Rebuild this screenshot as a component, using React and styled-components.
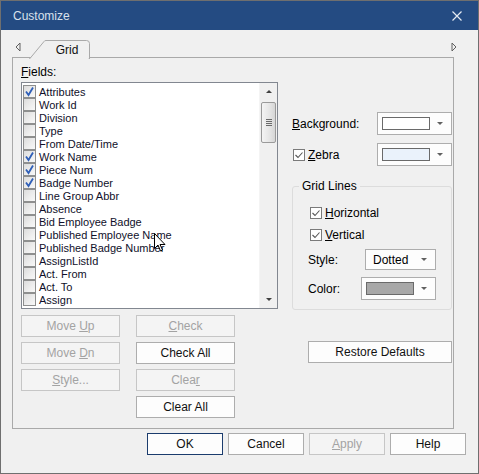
import React from "react";
import styled, { createGlobalStyle } from "styled-components";

const GlobalStyle = createGlobalStyle`
  html, body {
    margin: 0;
    padding: 0;
    background: #ffffff;
  }
  body {
    font-family: "Liberation Sans", Arial, sans-serif;
    font-size: 12px;
    color: #000;
  }
  u {
    text-decoration: underline;
    text-underline-offset: 1px;
  }
`;

const Window = styled.div`
  position: relative;
  width: 479px;
  height: 474px;
  box-sizing: border-box;
  border: 1px solid #6f6f6f;
  background: #f0f0f0;
  display: flex;
  flex-direction: column;
  overflow: hidden;
`;

const TitleBar = styled.div`
  height: 29px;
  background: #244b82;
  display: flex;
  align-items: center;
  justify-content: space-between;
  padding: 1px 16px 0 12px;
  box-sizing: border-box;
  color: #d9e1ec;
  font-size: 12px;
`;

const TabRow = styled.div`
  height: 27px;
  display: flex;
  align-items: flex-end;
  padding: 0 21px 0 14px;
  position: relative;
  z-index: 2;
`;

const ArrowBtn = styled.div`
  width: 14px;
  height: 27px;
  display: flex;
  align-items: flex-end;
  justify-content: ${(p) => (p.$right ? "flex-end" : "flex-start")};
  padding-bottom: 5px;
  box-sizing: border-box;
`;

const Tab = styled.div`
  position: relative;
  width: 61px;
  height: 18px;
  margin-bottom: -1px;
  display: flex;
  align-items: center;
  justify-content: center;
  padding: 1px 0 0 15px;
  box-sizing: border-box;
  font-size: 12px;
  color: #111;

  svg {
    position: absolute;
    left: 0;
    top: 0;
  }
  span {
    position: relative;
  }
`;

const Spacer = styled.div`
  flex: 1;
`;

const Panel = styled.div`
  margin-left: 11px;
  width: 442px;
  height: 372px;
  box-sizing: border-box;
  border: 1px solid #a9a9a9;
  display: grid;
  grid-template-columns: 257px 160px;
  column-gap: 14px;
  padding: 7px 0 0 8px;
  position: relative;
  z-index: 1;
`;

const Column = styled.div`
  display: flex;
  flex-direction: column;
`;

const FieldLabel = styled.div`
  height: 17px;
  line-height: 15px;
`;

const ListBox = styled.div`
  height: 227px;
  box-sizing: border-box;
  border: 1px solid #828790;
  background: #fff;
  display: flex;
`;

const Items = styled.div`
  flex: 1;
  padding: 2px 0 0 1px;
`;

const Item = styled.div`
  height: 13px;
  display: flex;
  align-items: center;
  gap: 3px;
  font-size: 11px;
  color: #10102a;
  white-space: nowrap;
`;

const ListCheck = styled.span`
  width: 13px;
  height: 13px;
  box-sizing: border-box;
  border: 1px solid #8e8f8f;
  background: linear-gradient(135deg, #dcdcdc 0%, #eeeeee 60%, #f8f8f8 100%);
  display: flex;
  align-items: center;
  justify-content: center;
`;

const ScrollBar = styled.div`
  width: 17px;
  background: #f0f0f0;
  border-left: 1px solid #f4f4f4;
  display: flex;
  flex-direction: column;
  align-items: center;
`;

const ScrollArrow = styled.div`
  height: 17px;
  width: 100%;
  display: flex;
  align-items: center;
  justify-content: center;
`;

const Tri = styled.span`
  width: 0;
  height: 0;
  border-left: 3px solid transparent;
  border-right: 3px solid transparent;
  ${(p) =>
    p.$up
      ? "border-bottom: 3px solid #404040;"
      : "border-top: 3px solid #404040;"}
`;

const Thumb = styled.div`
  width: 15px;
  height: 41px;
  margin-top: 2px;
  box-sizing: border-box;
  border: 1px solid #9a9a9a;
  border-radius: 2px;
  background: linear-gradient(90deg, #f4f4f4 0%, #e6e6e6 55%, #d6d6d6 100%);
  display: flex;
  flex-direction: column;
  align-items: center;
  justify-content: center;
  gap: 1px;

  i {
    display: block;
    width: 6px;
    height: 1px;
    background: #6a6a6a;
  }
`;

const ButtonGrid = styled.div`
  margin-top: 6px;
  display: grid;
  grid-template-columns: 99px 99px;
  column-gap: 16px;
  row-gap: 5px;
`;

const Button = styled.div`
  width: ${(p) => p.$w || 99}px;
  height: 22px;
  box-sizing: border-box;
  border: 1px solid
    ${(p) => (p.$default ? "#1b3c6d" : p.$disabled ? "#c6c6c6" : "#adadad")};
  background: ${(p) => (p.$disabled ? "#f4f4f4" : "#fdfdfd")};
  color: ${(p) => (p.$disabled ? "#a3a3a3" : "#111")};
  display: flex;
  align-items: center;
  justify-content: center;
  font-size: 12px;
  grid-column: ${(p) => p.$col || "auto"};
`;

const RightCol = styled.div`
  display: flex;
  flex-direction: column;
  padding-top: 47px;
`;

const Row = styled.div`
  height: 23px;
  display: flex;
  align-items: center;
  justify-content: space-between;
  margin-bottom: ${(p) => p.$mb || 0}px;
`;

const CheckLabel = styled.label`
  display: flex;
  align-items: center;
  gap: 3px;
  height: 16px;
  margin-left: ${(p) => p.$ml || 0}px;
  margin-top: ${(p) => p.$mt || 0}px;
`;

const FlatCheck = styled.span`
  width: 12px;
  height: 12px;
  box-sizing: border-box;
  border: 1px solid #7a7a7a;
  background: #fff;
  display: flex;
  align-items: center;
  justify-content: center;
`;

const Dropdown = styled.div`
  width: ${(p) => p.$w}px;
  height: ${(p) => p.$h}px;
  box-sizing: border-box;
  border: 1px solid #adadad;
  background: #fdfdfd;
  display: flex;
  align-items: center;
  padding: 0 8px 0 4px;
  gap: 6px;
`;

const Swatch = styled.span`
  width: ${(p) => p.$w}px;
  height: 13px;
  box-sizing: border-box;
  border: 1px solid #6a6a6a;
  background: ${(p) => p.$color};
`;

const DropText = styled.span`
  flex: 1;
  padding-left: 3px;
  font-size: 12px;
`;

const DropArrow = styled.span`
  margin-left: auto;
  width: 0;
  height: 0;
  border-left: 3px solid transparent;
  border-right: 3px solid transparent;
  border-top: 3px solid #606060;
`;

const GroupBox = styled.fieldset`
  margin: 13px 0 0;
  padding: 12px 15px 9px 15px;
  border: 1px solid #dcdcdc;
  border-radius: 3px;
  display: flex;
  flex-direction: column;

  legend {
    padding: 0 3px;
    margin-left: -9px;
    line-height: 14px;
  }
`;

const GroupRow = styled.div`
  display: flex;
  align-items: center;
  justify-content: space-between;
  height: ${(p) => p.$h}px;
  margin-top: ${(p) => p.$mt || 0}px;
`;

const RestoreRow = styled.div`
  display: flex;
  justify-content: flex-end;
  margin-top: 31px;
`;

const Footer = styled.div`
  display: flex;
  justify-content: flex-end;
  gap: 5px;
  padding: 4px 12px 0 0;
`;

const Cursor = styled.svg`
  position: absolute;
  left: 153px;
  top: 232px;
  z-index: 5;
`;

const fields = [
  ["Attributes", true],
  ["Work Id", false],
  ["Division", false],
  ["Type", false],
  ["From Date/Time", false],
  ["Work Name", true],
  ["Piece Num", true],
  ["Badge Number", true],
  ["Line Group Abbr", false],
  ["Absence", false],
  ["Bid Employee Badge", false],
  ["Published Employee Name", false],
  ["Published Badge Number", false],
  ["AssignListId", false],
  ["Act. From", false],
  ["Act. To", false],
  ["Assign", false],
];

const BlueTick = () => (
  <svg width="11" height="11" viewBox="0 0 11 11">
    <path d="M2 5.5 L4.5 9 L9 1.5" fill="none" stroke="#2f5fb8" strokeWidth="1.8" />
  </svg>
);

const GrayTick = () => (
  <svg width="10" height="10" viewBox="0 0 10 10">
    <path d="M1.5 5 L4 7.5 L8.5 2.5" fill="none" stroke="#555" strokeWidth="1.1" />
  </svg>
);

const App = () => {
  return (
    <>
      <GlobalStyle />
      <Window>
        <TitleBar>
          <span>Customize</span>
          <svg width="10" height="10" viewBox="0 0 10 10">
            <path d="M0.5 0.5 L9.5 9.5 M9.5 0.5 L0.5 9.5" stroke="#e6ebf2" strokeWidth="1.2" />
          </svg>
        </TitleBar>

        <TabRow>
          <ArrowBtn>
            <svg width="6" height="10" viewBox="0 0 6 10">
              <path d="M5 1 L1 5 L5 9 Z" fill="none" stroke="#606060" strokeWidth="1" />
            </svg>
          </ArrowBtn>
          <Tab>
            <svg width="61" height="19" viewBox="0 0 61 19">
              <path
                d="M0.5 19 L15 1.5 Q15.5 0.5 17 0.5 L57.5 0.5 Q60.5 0.5 60.5 3.5 L60.5 19 Z"
                fill="#f0f0f0"
                stroke="#a9a9a9"
                strokeWidth="1"
              />
              <rect x="1.5" y="18" width="58" height="1.5" fill="#f0f0f0" />
            </svg>
            <span>Grid</span>
          </Tab>
          <Spacer />
          <ArrowBtn $right>
            <svg width="6" height="10" viewBox="0 0 6 10">
              <path d="M1 1 L5 5 L1 9 Z" fill="none" stroke="#606060" strokeWidth="1" />
            </svg>
          </ArrowBtn>
        </TabRow>

        <Panel>
          <Column>
            <FieldLabel>
              <u>F</u>ields:
            </FieldLabel>
            <ListBox>
              <Items>
                {fields.map(([name, checked]) => (
                  <Item key={name}>
                    <ListCheck>{checked && <BlueTick />}</ListCheck>
                    {name}
                  </Item>
                ))}
              </Items>
              <ScrollBar>
                <ScrollArrow>
                  <Tri $up />
                </ScrollArrow>
                <Thumb>
                  <i />
                  <i />
                  <i />
                  <i />
                </Thumb>
                <Spacer />
                <ScrollArrow>
                  <Tri />
                </ScrollArrow>
              </ScrollBar>
            </ListBox>
            <ButtonGrid>
              <Button $disabled>
                Move&nbsp;<u>U</u>p
              </Button>
              <Button $disabled>
                <u>C</u>heck
              </Button>
              <Button $disabled>
                Move&nbsp;<u>D</u>n
              </Button>
              <Button>Check All</Button>
              <Button $disabled>
                <u>S</u>tyle...
              </Button>
              <Button $disabled>
                Clea<u>r</u>
              </Button>
              <Button $col="2">Clear All</Button>
            </ButtonGrid>
          </Column>

          <RightCol>
            <Row $mb={8}>
              <span>
                <u>B</u>ackground:
              </span>
              <Dropdown $w={75} $h={23}>
                <Swatch $w={48} $color="#ffffff" />
                <DropArrow />
              </Dropdown>
            </Row>
            <Row>
              <CheckLabel $ml={1}>
                <FlatCheck>
                  <GrayTick />
                </FlatCheck>
                <span>
                  <u>Z</u>ebra
                </span>
              </CheckLabel>
              <Dropdown $w={75} $h={23}>
                <Swatch $w={48} $color="#eaf2fb" />
                <DropArrow />
              </Dropdown>
            </Row>

            <GroupBox>
              <legend>Grid Lines</legend>
              <CheckLabel $ml={2}>
                <FlatCheck>
                  <GrayTick />
                </FlatCheck>
                <span>
                  <u>H</u>orizontal
                </span>
              </CheckLabel>
              <CheckLabel $ml={2} $mt={6}>
                <FlatCheck>
                  <GrayTick />
                </FlatCheck>
                <span>
                  <u>V</u>ertical
                </span>
              </CheckLabel>
              <GroupRow $h={21} $mt={6}>
                <span>Style:</span>
                <Dropdown $w={71} $h={21}>
                  <DropText>Dotted</DropText>
                  <DropArrow />
                </Dropdown>
              </GroupRow>
              <GroupRow $h={23} $mt={7}>
                <span>Color:</span>
                <Dropdown $w={75} $h={23}>
                  <Swatch $w={48} $color="#a8a8a8" />
                  <DropArrow />
                </Dropdown>
              </GroupRow>
            </GroupBox>

            <RestoreRow>
              <Button $w={144}>Restore Defaults</Button>
            </RestoreRow>
          </RightCol>
        </Panel>

        <Footer>
          <Button $w={76} $default>
            OK
          </Button>
          <Button $w={76}>Cancel</Button>
          <Button $w={76} $disabled>
            <u>A</u>pply
          </Button>
          <Button $w={76}>Help</Button>
        </Footer>

        <Cursor width="12" height="19" viewBox="0 0 12 19">
          <path
            d="M0.5 0.5 L0.5 15.5 L4 12 L6.5 18 L8.5 17 L6 11.5 L11 11.5 Z"
            fill="#ffffff"
            stroke="#000"
            strokeWidth="1"
          />
        </Cursor>
      </Window>
    </>
  );
};

export default App;
